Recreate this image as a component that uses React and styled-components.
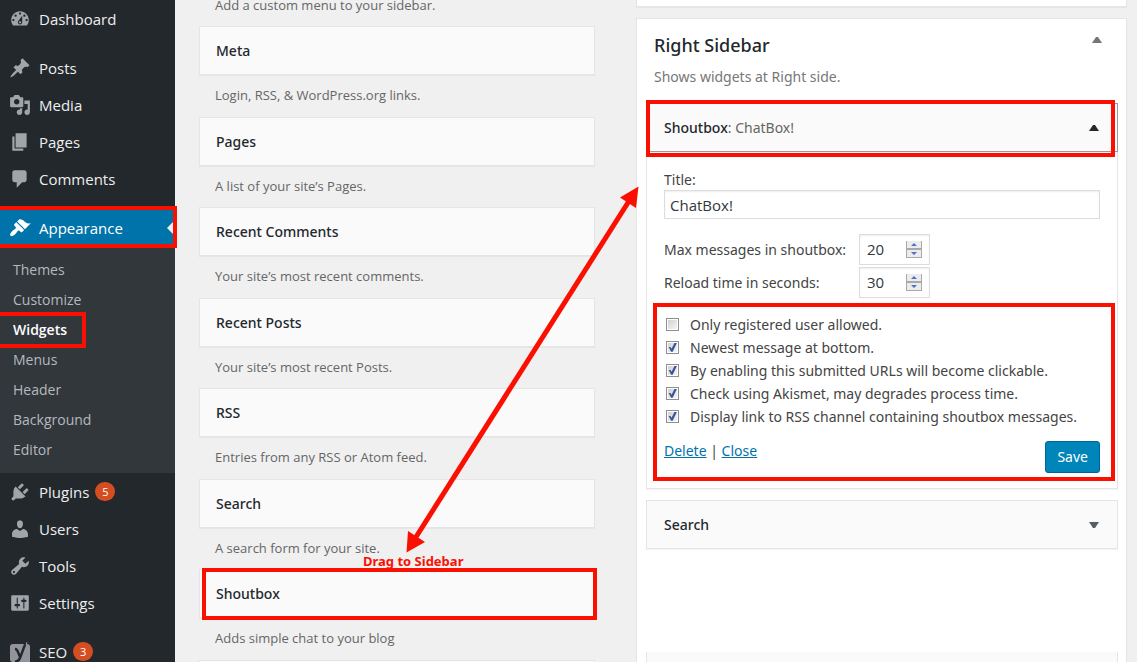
import React from "react";
import styled, { createGlobalStyle, css } from "styled-components";

const colors = {
  page: "#f0f0f0",
  menu: "#23282d",
  submenu: "#32373c",
  menuIcon: "#a0a5aa",
  menuText: "#eeeeee",
  submenuText: "#b4b9be",
  blue: "#0073aa",
  button: "#0085ba",
  badge: "#d54e21",
  border: "#e5e5e5",
  widget: "#fafafa",
  heading: "#23282d",
  text: "#444444",
  muted: "#666666",
  marker: "#fb0f00"
};

const fonts = {
  base: '"Open Sans", sans-serif',
  wide: '"Noto Sans", "Open Sans", sans-serif'
};

const icons = {
  dashboard:
    "M3.76 16h12.48c1.1-1.37 1.76-3.11 1.76-5 0-4.42-3.58-8-8-8s-8 3.58-8 8c0 1.89.66 3.63 1.76 5zM10 4c.55 0 1 .45 1 1s-.45 1-1 1-1-.45-1-1 .45-1 1-1zM6 6c.55 0 1 .45 1 1s-.45 1-1 1-1-.45-1-1 .45-1 1-1zm8 0c.55 0 1 .45 1 1s-.45 1-1 1-1-.45-1-1 .45-1 1-1zm-5.37 5.55L12 7v6c0 1.1-.9 2-2 2s-2-.9-2-2c0-.57.24-1.08.63-1.45zM4 10c.55 0 1 .45 1 1s-.45 1-1 1-1-.45-1-1 .45-1 1-1zm12 0c.55 0 1 .45 1 1s-.45 1-1 1-1-.45-1-1 .45-1 1-1zm-5 3c0-.55-.45-1-1-1s-1 .45-1 1 .45 1 1 1 1-.45 1-1z",
  posts:
    "M10.44 3.02l1.82-1.82 6.36 6.35-1.83 1.82c-1.05-.68-2.48-.57-3.41.36l-.75.75c-.92.93-1.04 2.35-.35 3.41l-1.83 1.82-2.41-2.41-2.8 2.79c-.42.42-3.38 2.71-3.8 2.29s1.86-3.39 2.28-3.81l2.79-2.79L4.1 9.36l1.83-1.82c1.05.69 2.48.57 3.4-.36l.75-.75c.93-.92 1.05-2.35.36-3.41z",
  media:
    "M13 11V4c0-.55-.45-1-1-1h-1.67L9 1H5L3.67 3H2c-.55 0-1 .45-1 1v7c0 .55.45 1 1 1h10c.55 0 1-.45 1-1zM7 4.5c1.38 0 2.5 1.12 2.5 2.5S8.38 9.5 7 9.5 4.5 8.38 4.5 7 5.62 4.5 7 4.5zM14 6h5v10.5c0 1.38-1.12 2.5-2.5 2.5S14 17.88 14 16.5s1.12-2.5 2.5-2.5c.17 0 .34.02.5.05V9h-3V6zm-4 8.05V13h2v3.5c0 1.38-1.12 2.5-2.5 2.5S7 17.88 7 16.5 8.12 14 9.5 14c.17 0 .34.02.5.05z",
  pages: "M6 15V2h10v13H6zm-1 1h8v2H3V5h2v11z",
  comments:
    "M5 2h9c1.1 0 2 .9 2 2v7c0 1.1-.9 2-2 2h-2l-5 5v-5H5c-1.1 0-2-.9-2-2V4c0-1.1.9-2 2-2z",
  appearance:
    "M14.48 11.06L7.41 3.99l1.5-1.5c.5-.56 2.3-.47 3.51.32 1.21.8 1.43 1.28 2.91 2.1 1.18.64 2.45 1.26 4.45.85zm-.71.71L6.7 4.7 4.93 6.47c-.39.39-.39 1.02 0 1.41l1.06 1.06c.39.39.39 1.03 0 1.42-.6.6-1.43 1.11-2.21 1.69-.35.26-.7.53-1.01.84C1.43 14.23.4 16.08 1.4 17.07c.99 1 2.84-.03 4.18-1.36.31-.31.58-.66.85-1.02.57-.78 1.08-1.61 1.69-2.21.39-.39 1.02-.39 1.41 0l1.06 1.06c.39.39 1.02.39 1.41 0z",
  plugins:
    "M13.11 4.36L9.87 7.6 8 5.73l3.24-3.24c.35-.34 1.05-.2 1.56.32.52.51.66 1.21.31 1.55zm-8 1.77l.91-1.12 9.01 9.01-1.19.84c-.71.71-2.63 1.16-3.82 1.16H6.14L4.9 17.26c-.59.59-1.54.59-2.12 0-.59-.58-.59-1.53 0-2.12l1.24-1.24v-3.88c0-1.13.4-3.19 1.09-3.89zm7.26 3.97l3.24-3.24c.34-.35 1.04-.21 1.55.31.52.51.66 1.21.31 1.55l-3.24 3.25z",
  users:
    "M10 9.25c-2.27 0-2.73-3.44-2.73-3.44C7 4.02 7.82 2 9.97 2c2.16 0 2.98 2.02 2.71 3.81 0 0-.41 3.44-2.68 3.44zm0 2.57L12.72 10c2.39 0 4.52 2.33 4.52 4.53v2.49s-3.65 1.13-7.24 1.13c-3.65 0-7.24-1.13-7.24-1.13v-2.49c0-2.25 1.94-4.48 4.47-4.48z",
  tools:
    "M16.68 9.77c-1.34 1.34-3.3 1.67-4.95.99l-5.41 6.52c-.99.99-2.59.99-3.58 0s-.99-2.59 0-3.57l6.52-5.42c-.68-1.65-.35-3.61.99-4.95 1.28-1.28 3.12-1.62 4.72-1.06l-2.89 2.89 2.82 2.82 2.86-2.87c.53 1.58.18 3.39-1.08 4.65zM3.81 16.21c.4.39 1.04.39 1.43 0 .4-.4.4-1.04 0-1.43-.39-.4-1.03-.4-1.43 0-.39.39-.39 1.03 0 1.43z",
  settings:
    "M18 16V4c0-.55-.45-1-1-1H3c-.55 0-1 .45-1 1v12c0 .55.45 1 1 1h14c.55 0 1-.45 1-1zM8 11h1c.55 0 1 .45 1 1s-.45 1-1 1H8v1.5c0 .28-.22.5-.5.5s-.5-.22-.5-.5V13H6c-.55 0-1-.45-1-1s.45-1 1-1h1V5.5c0-.28.22-.5.5-.5s.5.22.5.5V11zm5-2h-1c-.55 0-1-.45-1-1s.45-1 1-1h1V5.5c0-.28.22-.5.5-.5s.5.22.5.5V7h1c.55 0 1 .45 1 1s-.45 1-1 1h-1v5.5c0 .28-.22.5-.5.5s-.5-.22-.5-.5V9z"
};

const menuGroups = [
  [{ icon: "dashboard", text: "Dashboard" }],
  [
    { icon: "posts", text: "Posts" },
    { icon: "media", text: "Media" },
    { icon: "pages", text: "Pages" },
    { icon: "comments", text: "Comments" }
  ],
  [
    {
      icon: "appearance",
      text: "Appearance",
      current: true,
      children: [
        "Themes",
        "Customize",
        "Widgets",
        "Menus",
        "Header",
        "Background",
        "Editor"
      ]
    },
    { icon: "plugins", text: "Plugins", count: 5 },
    { icon: "users", text: "Users" },
    { icon: "tools", text: "Tools" },
    { icon: "settings", text: "Settings" }
  ],
  [{ icon: "seo", text: "SEO", count: 3 }]
];

const availableWidgets = [
  { title: "Meta", text: "Login, RSS, & WordPress.org links." },
  { title: "Pages", text: "A list of your site’s Pages." },
  { title: "Recent Comments", text: "Your site’s most recent comments." },
  { title: "Recent Posts", text: "Your site’s most recent Posts." },
  { title: "RSS", text: "Entries from any RSS or Atom feed." },
  { title: "Search", text: "A search form for your site." },
  { title: "Shoutbox", text: "Adds simple chat to your blog", marked: true }
];

const options = [
  { id: "registered", text: "Only registered user allowed.", checked: false },
  { id: "newest", text: "Newest message at bottom.", checked: true },
  {
    id: "urls",
    text: "By enabling this submitted URLs will become clickable.",
    checked: true
  },
  {
    id: "akismet",
    text: "Check using Akismet, may degrades process time.",
    checked: true
  },
  {
    id: "rss",
    text: "Display link to RSS channel containing shoutbox messages.",
    checked: true
  }
];

const GlobalStyle = createGlobalStyle`
  * {
    box-sizing: border-box;
  }

  body {
    margin: 0;
    background: ${colors.page};
    color: ${colors.text};
    font-family: ${fonts.base};
    font-size: 15px;
  }
`;

const Page = styled.div`
  display: flex;
  height: 100vh;
  overflow: hidden;
`;

/* Red frame drawn over the part that it points out */
const Marker = styled.div`
  position: absolute;
  z-index: 2;
  inset: ${props => props.$inset};
  border: 4px solid ${colors.marker};
  pointer-events: none;
`;

/* Admin menu */

const Menu = styled.nav`
  flex: none;
  width: 175px;
  background: ${colors.menu};
`;

const MenuGroup = styled.ul`
  list-style: none;
  margin: 0 0 12px;
  padding: 0;
`;

const MenuItem = styled.li`
  position: relative;
`;

const MenuLink = styled.a`
  position: relative;
  display: flex;
  align-items: center;
  gap: 8px;
  height: 37px;
  padding-left: 9px;
  color: ${colors.menuText};
  text-decoration: none;

  ${props =>
    props.$current &&
    css`
      background: ${colors.blue};
      color: #ffffff;

      &:after {
        content: "";
        position: absolute;
        right: 0;
        border: 8px solid transparent;
        border-right-color: ${colors.page};
      }
    `}
`;

const MenuIcon = styled.svg`
  flex: none;
  width: 22px;
  height: 22px;
  fill: ${props => (props.$current ? "#ffffff" : colors.menuIcon)};
`;

const Count = styled.span`
  min-width: 20px;
  margin-left: -2px;
  border-radius: 10px;
  background: ${colors.badge};
  color: #ffffff;
  font-size: 11px;
  line-height: 19px;
  text-align: center;
`;

const Submenu = styled.ul`
  list-style: none;
  margin: 0;
  padding: 9px 0 8px;
  background: ${colors.submenu};
`;

const SubmenuItem = styled.li`
  position: relative;
`;

const SubmenuLink = styled.a`
  display: block;
  padding-left: 13px;
  font-size: 14px;
  line-height: 30px;
  text-decoration: none;
  color: ${props => (props.$current ? "#ffffff" : colors.submenuText)};
  font-weight: ${props => (props.$current ? 600 : 400)};
`;

/* Widget columns */

const Main = styled.main`
  position: relative;
  flex: 1;
  display: grid;
  grid-template-columns: 396fr 491fr;
  column-gap: 41px;
  align-items: start;
  padding: 0 10px 0 24px;
`;

const Available = styled.div`
  display: flex;
  flex-direction: column;
`;

const WidgetBar = styled.div`
  position: relative;
  display: flex;
  align-items: center;
  justify-content: space-between;
  height: 49px;
  padding: 0 18px 0 ${props => (props.$placed ? "17px" : "16px")};
  border: 1px solid ${props => (props.$active ? "#999999" : colors.border)};
  background: ${colors.widget};
  box-shadow: 0 1px 1px rgba(0, 0, 0, 0.04);
`;

const WidgetTitle = styled.h4`
  margin: 0;
  color: ${colors.heading};
  font-family: ${fonts.wide};
  font-size: 14px;
  font-weight: 500;
`;

const InWidgetTitle = styled.span`
  color: ${colors.muted};
  font-weight: 400;
`;

const Description = styled.p`
  margin: 0;
  padding: 11px 16px;
  color: ${colors.muted};
  font-size: 13px;
  line-height: 1.5;
`;

/* The list is scrolled down to the end of this text */
const TopDescription = styled(Description)`
  padding: 0 16px 15px;
  line-height: 11px;
`;

const Areas = styled.div`
  display: flex;
  flex-direction: column;
  gap: 11px;
`;

const Area = styled.section`
  min-height: 7px;
  padding: 0 8px 0 9px;
  border: 1px solid ${colors.border};
  border-top-width: ${props => (props.$cut ? "0" : "1px")};
  background: #ffffff;
  box-shadow: 0 1px 1px rgba(0, 0, 0, 0.04);
`;

const AreaHead = styled.div`
  display: flex;
  align-items: flex-start;
  justify-content: space-between;
  padding: 13px 16px 0 8px;
`;

const AreaTitle = styled.h3`
  margin: 0;
  color: ${colors.heading};
  font-family: ${fonts.wide};
  font-size: 18px;
  font-weight: 500;
  line-height: 26px;
`;

const AreaText = styled.p`
  margin: 0;
  padding: 8px 8px 15px;
  color: #777777;
  font-family: ${fonts.wide};
  font-size: 14px;
  line-height: 22px;
`;

const Toggle = styled.button`
  width: 10px;
  height: 16px;
  padding: 0;
  border: 0;
  background: none;

  &:before {
    content: "";
    display: block;
    border: 4px solid transparent;
    border-top-width: ${props => (props.$up ? "0" : "6px")};
    border-bottom-width: ${props => (props.$up ? "6px" : "0")};
    border-${props => (props.$up ? "bottom" : "top")}-color: ${props =>
      props.$color};
  }
`;

const WidgetBody = styled.form`
  display: flex;
  flex-direction: column;
  padding: 17px 17px 15px;
  border: 1px solid ${colors.border};
  border-top: 0;
  box-shadow: 0 1px 1px rgba(0, 0, 0, 0.04);
`;

const Label = styled.label`
  font-family: ${fonts.wide};
  font-size: 14px;
  line-height: 21px;
`;

const textField = css`
  border: 1px solid #dddddd;
  border-radius: 0;
  background: #ffffff;
  box-shadow: inset 0 1px 2px rgba(0, 0, 0, 0.07);
  color: #32373c;
  font-family: inherit;
  font-size: 15px;
`;

const TextInput = styled.input`
  ${textField}
  height: 29px;
  margin-bottom: 15px;
  padding: 0 5px;
`;

const NumberRow = styled.div`
  display: grid;
  grid-template-columns: 195px 71px;
  align-items: center;
  height: 31px;
  margin-bottom: 2px;
`;

const NumberField = styled.div`
  position: relative;
`;

const NumberInput = styled.input`
  ${textField}
  display: block;
  width: 100%;
  height: 31px;
  padding: 0 7px 2px;
  appearance: textfield;

  &::-webkit-inner-spin-button {
    appearance: none;
  }
`;

const Spinner = styled.svg`
  position: absolute;
  top: 7px;
  right: 8px;
  width: 16px;
  height: 17px;
`;

const Options = styled.div`
  position: relative;
  display: flex;
  flex-direction: column;
  margin-top: 13px;
`;

const Option = styled.div`
  display: flex;
  align-items: center;
  gap: 11px;
  height: 23px;
  padding-left: 2px;
`;

const Checkbox = styled.input`
  appearance: none;
  flex: none;
  width: 13px;
  height: 13px;
  margin: 0;
  border: 1px solid #8e8f8f;
  background: linear-gradient(135deg, #cfd0d3, #f6f6f6) content-box #f4f4f4;
  padding: 1px;

  &:checked:before {
    content: "";
    display: block;
    width: 9px;
    height: 9px;
    background: #3b5399;
    clip-path: polygon(
      8% 45%,
      28% 45%,
      40% 65%,
      72% 0,
      98% 0,
      52% 98%,
      34% 98%
    );
  }
`;

const Actions = styled.div`
  display: flex;
  align-items: flex-start;
  justify-content: space-between;
  margin-top: 13px;
`;

const Links = styled.div`
  font-family: ${fonts.wide};
  font-size: 14px;
  line-height: 20px;
`;

const ActionLink = styled.a`
  color: ${colors.blue};
`;

const SaveButton = styled.button`
  height: 32px;
  padding: 0 11px 1px;
  border: 1px solid #006799;
  border-radius: 3px;
  background: ${colors.button};
  color: #ffffff;
  font-family: ${fonts.wide};
  font-size: 14px;
`;

const Placed = styled.div`
  margin-bottom: 11px;
`;

/* Next widget, still sliding into its place */
const NextWidget = styled.div`
  height: 49px;
  margin-top: 103px;
  border: 1px solid ${colors.border};
  border-top: 0;
  background: ${colors.widget};
`;

/* Drawn on the free canvas over both columns */
const Arrow = styled.svg`
  position: absolute;
  z-index: 1;
  left: 227px;
  top: 180px;
  width: 240px;
  height: 380px;
  fill: ${colors.marker};
  stroke: ${colors.marker};
  pointer-events: none;
`;

const Note = styled.strong`
  position: absolute;
  z-index: 1;
  left: 188px;
  top: 552px;
  color: ${colors.marker};
  font-family: ${fonts.wide};
  font-size: 13px;
  line-height: 18px;
`;

const SeoLogo = () => (
  <MenuIcon viewBox="0 0 22 22" aria-hidden="true">
    <path
      d="M4 3h14a3 3 0 0 1 3 3v15H4a3 3 0 0 1-3-3V6a3 3 0 0 1 3-3z"
      fill="#92939b"
    />
    <path
      d="M6 8q2 0 3 3l2 5M17 1l-6 16q-1 3-5 4"
      fill="none"
      stroke={colors.menu}
      strokeWidth="2.4"
    />
    <path d="M18 1l-1 3" fill="none" stroke="#92939b" />
  </MenuIcon>
);

const AdminMenu = () => (
  <Menu>
    {menuGroups.map((group, index) => (
      <MenuGroup key={index}>
        {group.map(item => (
          <MenuItem key={item.text}>
            <MenuLink href="#" $current={item.current}>
              {item.icon === "seo" ? (
                <SeoLogo />
              ) : (
                <MenuIcon
                  viewBox="0 0 20 20"
                  $current={item.current}
                  aria-hidden="true"
                >
                  <path fillRule="evenodd" d={icons[item.icon]} />
                </MenuIcon>
              )}
              {item.text}
              {item.count && <Count>{item.count}</Count>}
              {item.current && <Marker $inset="-3px -2px -2px -4px" />}
            </MenuLink>
            {item.children && (
              <Submenu>
                {item.children.map(text => (
                  <SubmenuItem key={text}>
                    <SubmenuLink href="#" $current={text === "Widgets"}>
                      {text}
                    </SubmenuLink>
                    {text === "Widgets" && (
                      <Marker $inset="-3px 89px -3px -4px" />
                    )}
                  </SubmenuItem>
                ))}
              </Submenu>
            )}
          </MenuItem>
        ))}
      </MenuGroup>
    ))}
  </Menu>
);

const NumberSetting = ({ id, text, value }) => (
  <NumberRow>
    <Label htmlFor={id}>{text}</Label>
    <NumberField>
      <NumberInput id={id} type="number" defaultValue={value} />
      <Spinner viewBox="0 0 16 17" aria-hidden="true">
        <path d="M0 0h16v17H0z" fill="#ececec" />
        <path
          d="M0 0h1v17H0zM15 0h1v17h-1zM0 7h16v2H0zM0 16h16v1H0z"
          fill="#a9a9ad"
        />
        <path d="M5 5h6L8 2zM5 11h6l-3 3z" fill="#4a76bd" />
      </Spinner>
    </NumberField>
  </NumberRow>
);

const ShoutboxWidget = () => (
  <Placed>
    <WidgetBar $placed $active>
      <WidgetTitle>
        Shoutbox<InWidgetTitle>: ChatBox!</InWidgetTitle>
      </WidgetTitle>
      <Toggle $up $color={colors.heading} aria-label="Close Shoutbox" />
      <Marker $inset="-4px 2px -6px -1px" />
    </WidgetBar>
    <WidgetBody onSubmit={event => event.preventDefault()}>
      <Label htmlFor="title">Title:</Label>
      <TextInput id="title" type="text" defaultValue="ChatBox!" />
      <NumberSetting id="max" text="Max messages in shoutbox:" value={20} />
      <NumberSetting id="reload" text="Reload time in seconds:" value={30} />
      <Options>
        {options.map(item => (
          <Option key={item.id}>
            <Checkbox
              id={item.id}
              type="checkbox"
              defaultChecked={item.checked}
            />
            <Label htmlFor={item.id}>{item.text}</Label>
          </Option>
        ))}
        <Actions>
          <Links>
            <ActionLink href="#">Delete</ActionLink> |{" "}
            <ActionLink href="#">Close</ActionLink>
          </Links>
          <SaveButton type="submit">Save</SaveButton>
        </Actions>
        <Marker $inset="-10px -15px -8px -11px" />
      </Options>
    </WidgetBody>
  </Placed>
);

const App = () => {
  return (
    <Page>
      <GlobalStyle />
      <AdminMenu />
      <Main>
        <Available>
          <TopDescription>Add a custom menu to your sidebar.</TopDescription>
          {availableWidgets.map(item => (
            <React.Fragment key={item.title}>
              <WidgetBar>
                <WidgetTitle>{item.title}</WidgetTitle>
                {item.marked && <Marker $inset="-2px -3px -3px 2px" />}
              </WidgetBar>
              <Description>{item.text}</Description>
            </React.Fragment>
          ))}
          <WidgetBar />
        </Available>
        <Areas>
          <Area $cut />
          <Area>
            <AreaHead>
              <AreaTitle>Right Sidebar</AreaTitle>
              <Toggle $up $color="#72777c" aria-label="Close Right Sidebar" />
            </AreaHead>
            <AreaText>Shows widgets at Right side.</AreaText>
            <ShoutboxWidget />
            <WidgetBar $placed>
              <WidgetTitle>Search</WidgetTitle>
              <Toggle $color="#555d66" aria-label="Open Search" />
            </WidgetBar>
            <NextWidget />
          </Area>
        </Areas>
        <Arrow viewBox="0 0 240 380" aria-hidden="true">
          <path d="M227 21L14 357" strokeWidth="5" />
          <path
            d="M236.500 6.500L218 17.500l16 10.500zM4.500 372.500L6 351l17 11z"
            stroke="none"
          />
        </Arrow>
        <Note>Drag to Sidebar</Note>
      </Main>
    </Page>
  );
};

export default App;
